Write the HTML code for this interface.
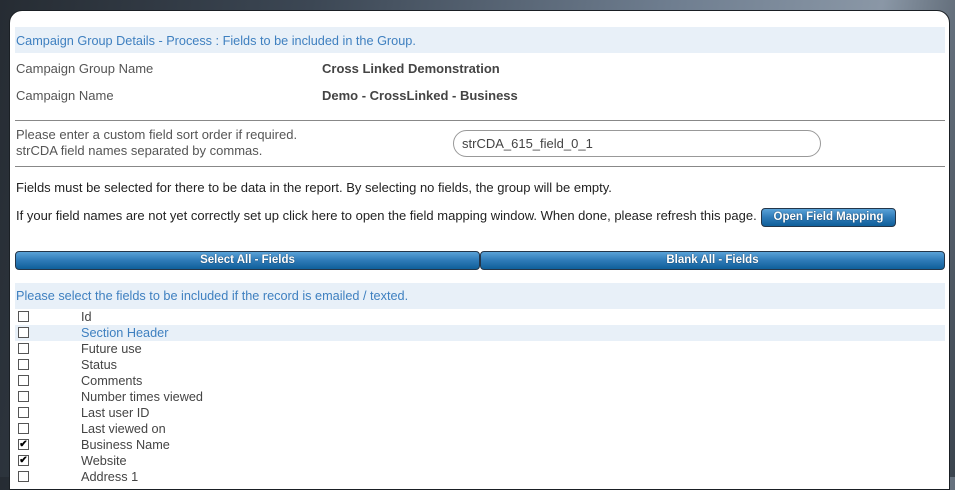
<!DOCTYPE html>
<html><head><style>
*{margin:0;padding:0;box-sizing:border-box}
body{width:955px;height:477px;overflow:hidden;background:linear-gradient(100deg,#262c33 0%,#3c4754 30%,#6f7e90 65%,#8a97a6 85%,#3a434d 100%);font-family:"Liberation Sans",Tahoma,sans-serif;font-size:13px;color:#333;position:relative}
.panel{position:absolute;left:9px;top:10px;width:941px;height:480px;background:#fff;border-radius:13px 13px 0 0;border:1px solid #1a1f24}
.a{position:absolute;white-space:nowrap}
.band{position:absolute;left:15px;width:930px;background:#e8f0f8;color:#3f80c0;font-size:12.7px}
.hr{position:absolute;left:15px;width:930px;height:1px;background:#888}
.btn{position:absolute;height:19px;border:1px solid #24364a;border-radius:4px;background:linear-gradient(#5aa2d8,#2e7ab7 50%,#0f5f9a);color:#fff;font-weight:bold;font-size:11.5px;text-align:center;line-height:17px;text-shadow:0 0 1px #123}
.cb{position:absolute;left:18px;width:11px;height:11px;border:1px solid #555;background:#fff;font-size:10px;line-height:9px;text-align:center;color:#000;font-weight:bold}
.lbl{position:absolute;left:81px;color:#444;font-size:12.7px}
</style></head><body>
<div class="panel"></div>
<div class="band" style="top:27px;height:26px;line-height:28px;padding-left:1px">Campaign Group Details - Process : Fields to be included in the Group.</div>
<div class="a" style="left:16px;top:61px;color:#555">Campaign Group Name</div>
<div class="a" style="left:322px;top:61px;font-weight:bold;color:#444">Cross Linked Demonstration</div>
<div class="a" style="left:16px;top:88px;color:#555">Campaign Name</div>
<div class="a" style="left:322px;top:88px;font-weight:bold;color:#444">Demo - CrossLinked - Business</div>
<div class="hr" style="top:120px"></div>
<div class="a" style="left:16px;top:127px;color:#555;line-height:16px">Please enter a custom field sort order if required.<br>strCDA field names separated by commas.</div>
<div class="a" style="left:453px;top:130px;width:368px;height:27px;border:1px solid #999;border-radius:14px;padding-left:8px;line-height:25px;color:#444">strCDA_615_field_0_1</div>
<div class="hr" style="top:166px"></div>
<div class="a" style="left:16px;top:180px;color:#222">Fields must be selected for there to be data in the report. By selecting no fields, the group will be empty.</div>
<div class="a" style="left:16px;top:208px;color:#222">If your field names are not yet correctly set up click here to open the field mapping window. When done, please refresh this page.</div>
<div class="btn" style="left:761px;top:208px;width:135px">Open Field Mapping</div>
<div class="btn" style="left:15px;top:251px;width:465px">Select All - Fields</div>
<div class="btn" style="left:480px;top:251px;width:465px">Blank All - Fields</div>
<div class="band" style="top:283px;height:26px;line-height:26px;padding-left:1px">Please select the fields to be included if the record is emailed / texted.</div>
<div class="band" style="top:325px;height:16px"></div>
<div class="cb" style="top:311px"></div><div class="lbl" style="top:310px">Id</div>
<div class="cb" style="top:327px"></div><div class="lbl" style="top:326px;color:#3f80c0">Section Header</div>
<div class="cb" style="top:343px"></div><div class="lbl" style="top:342px">Future use</div>
<div class="cb" style="top:359px"></div><div class="lbl" style="top:358px">Status</div>
<div class="cb" style="top:375px"></div><div class="lbl" style="top:374px">Comments</div>
<div class="cb" style="top:391px"></div><div class="lbl" style="top:390px">Number times viewed</div>
<div class="cb" style="top:407px"></div><div class="lbl" style="top:406px">Last user ID</div>
<div class="cb" style="top:423px"></div><div class="lbl" style="top:422px">Last viewed on</div>
<div class="cb" style="top:439px">✔</div><div class="lbl" style="top:438px">Business Name</div>
<div class="cb" style="top:455px">✔</div><div class="lbl" style="top:454px">Website</div>
<div class="cb" style="top:471px"></div><div class="lbl" style="top:470px">Address 1</div>
</body></html>
